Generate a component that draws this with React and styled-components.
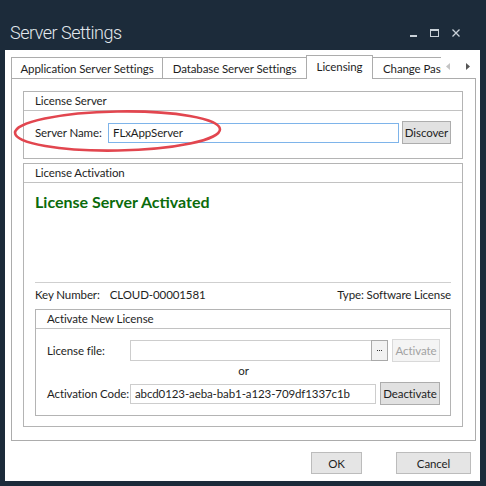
import React from "react";
import styled, { createGlobalStyle } from "styled-components";

const GlobalStyle = createGlobalStyle`
  html, body {
    margin: 0;
    padding: 0;
    background: #1c2b3a;
  }
  * {
    box-sizing: border-box;
  }
`;

const uiFont = `"Lato", "Liberation Sans", sans-serif`;

const Window = styled.div`
  position: relative;
  width: 486px;
  height: 486px;
  padding: 0 6px 5px 5px;
  display: flex;
  flex-direction: column;
  background: #1c2b3a;
  font-family: ${uiFont};
  font-size: 11.5px;
  letter-spacing: -0.1px;
  color: #1e1e1e;
`;

const TitleBar = styled.div`
  height: 50px;
  display: flex;
  align-items: flex-start;
`;

const Title = styled.h1`
  flex: 1;
  margin: 0;
  padding: 22px 0 0 5px;
  font: 300 18px/22px "Roboto", sans-serif;
  letter-spacing: -0.5px;
  color: #e3e9ee;
`;

const WinControls = styled.div`
  display: flex;
  margin: 29px 14px 0 0;
`;

const WinButton = styled.div`
  width: 21px;
  height: 8px;
  display: flex;
  align-items: flex-end;
  justify-content: center;
  color: #c9d1d8;
`;

const Body = styled.div`
  flex: 1;
  background: #fff;
  padding: 5px 4px 7px 6px;
  display: flex;
  flex-direction: column;
`;

const TabStrip = styled.div`
  height: 23px;
  display: flex;
  align-items: flex-start;
  position: relative;
  z-index: 1;
`;

const TabList = styled.div`
  flex: 1;
  height: 24px;
  display: flex;
  align-items: flex-start;
  overflow: hidden;
`;

const Tab = styled.div`
  flex-shrink: 0;
  width: ${(p) => p.$w}px;
  height: ${(p) => (p.$active ? 24 : 21)}px;
  margin-top: ${(p) => (p.$active ? 0 : 2)}px;
  margin-left: ${(p) => (p.$first ? 0 : -1)}px;
  padding-left: ${(p) => (p.$left ? 10 : 0)}px;
  padding-bottom: ${(p) => (p.$active ? 2 : 0)}px;
  border: 1px solid #acacac;
  border-bottom: none;
  background: #fff;
  position: relative;
  z-index: ${(p) => (p.$active ? 2 : 1)};
  display: flex;
  align-items: center;
  justify-content: ${(p) => (p.$left ? "flex-start" : "center")};
  white-space: nowrap;
  color: #1e1e1e;
`;

const TabArrows = styled.div`
  width: 35px;
  height: 23px;
  display: flex;
  align-items: center;
  padding-left: 5px;
  gap: 16px;
`;

const TabPanel = styled.div`
  flex: 1;
  border: 1px solid #acacac;
  padding: 12px 12px 13px 11px;
  display: flex;
  flex-direction: column;
  gap: 4px;
`;

const Group = styled.section`
  border: 1px solid #b4b4b4;
  display: flex;
  flex-direction: column;
  flex: ${(p) => (p.$grow ? 1 : "none")};
`;

const GroupHeader = styled.div`
  height: 19px;
  line-height: 18px;
  padding-left: 11px;
  border-bottom: 1px solid #c2c2c2;
`;

const GroupContent = styled.div`
  flex: 1;
  display: flex;
  flex-direction: column;
  padding: ${(p) => p.$pad};
`;

const Row = styled.div`
  height: 23px;
  display: flex;
  align-items: center;
  gap: ${(p) => p.$gap || 0}px;
`;

const Label = styled.span`
  width: ${(p) => p.$w}px;
  flex-shrink: 0;
  white-space: nowrap;
`;

const TextBox = styled.div`
  flex: 1;
  height: 20px;
  border: 1px solid ${(p) => (p.$focused ? "#7eb4ea" : "#cdcdcd")};
  padding-left: 4px;
  display: flex;
  align-items: center;
  white-space: nowrap;
  overflow: hidden;
  background: #fff;
`;

const FileBox = styled.div`
  flex: 1;
  height: 21px;
  border: 1px solid #cdcdcd;
  display: flex;
`;

const BrowseButton = styled.div`
  margin: -1px -1px -1px auto;
  width: 17px;
  border: 1px solid #a9a9a9;
  background: #f2f2f2;
  display: flex;
  align-items: center;
  justify-content: center;
  gap: 1px;
`;

const Dot = styled.span`
  width: 1px;
  height: 1px;
  background: #333;
`;

const Button = styled.button`
  width: ${(p) => p.$w}px;
  height: ${(p) => p.$h || 23}px;
  flex-shrink: 0;
  padding: 0;
  font: inherit;
  letter-spacing: inherit;
  color: ${(p) => (p.disabled ? "#a2a2a2" : "#1e1e1e")};
  background: ${(p) => (p.disabled ? "#f4f4f4" : "#e1e1e1")};
  border: 1px solid ${(p) => (p.disabled ? "#d9d9d9" : "#adadad")};
  border-radius: 0;
`;

const Status = styled.div`
  font-size: 16px;
  font-weight: 700;
  line-height: 20px;
  letter-spacing: 0;
  color: #0b6b0b;
`;

const Spacer = styled.div`
  flex: 1;
`;

const Separator = styled.div`
  border-top: 1px solid #cfcfcf;
`;

const KeyRow = styled.div`
  display: flex;
  justify-content: space-between;
  line-height: 18px;
  padding: 3px 0 5px;
`;

const KeyValue = styled.span`
  margin-left: 10px;
`;

const OrLine = styled.div`
  height: 18px;
  line-height: 18px;
  margin-bottom: 2px;
  text-align: center;
`;

const Footer = styled.div`
  margin-top: 11px;
  display: flex;
  justify-content: flex-end;
  gap: 34px;
  padding-right: 5px;
`;

const FooterButton = styled(Button)`
  height: 22px;
  background: #e5e5e5;
  border-color: #bcbcbc;
`;

const Annotation = styled.svg`
  position: absolute;
  left: 12px;
  top: 108px;
  pointer-events: none;
`;

function Arrow({ dir, color }) {
  return (
    <svg width="4" height="7" viewBox="0 0 4 7">
      <path d={dir === "left" ? "M4 0 L0 3.5 L4 7 Z" : "M0 0 L4 3.5 L0 7 Z"} fill={color} />
    </svg>
  );
}

export default function App() {
  return (
    <>
      <GlobalStyle />
      <Window>
        <TitleBar>
          <Title>Server Settings</Title>
          <WinControls>
            <WinButton>
              <svg width="7" height="2">
                <rect width="7" height="2" fill="currentColor" />
              </svg>
            </WinButton>
            <WinButton>
              <svg width="9" height="8" viewBox="0 0 9 8">
                <rect x="0.5" y="0.5" width="8" height="7" fill="none" stroke="currentColor" />
                <rect x="0" y="0" width="9" height="2" fill="currentColor" />
              </svg>
            </WinButton>
            <WinButton>
              <svg width="8" height="8" viewBox="0 0 8 8">
                <path d="M0.5 0.5 L7.5 7.5 M7.5 0.5 L0.5 7.5" stroke="currentColor" strokeWidth="1.3" />
              </svg>
            </WinButton>
          </WinControls>
        </TitleBar>

        <Body>
          <TabStrip>
            <TabList>
              <Tab $w={152} $first>Application Server Settings</Tab>
              <Tab $w={145}>Database Server Settings</Tab>
              <Tab $w={67} $active>Licensing</Tab>
              <Tab $w={114} $left>Change Password</Tab>
            </TabList>
            <TabArrows>
              <Arrow dir="left" color="#c4c4c4" />
              <Arrow dir="right" color="#555" />
            </TabArrows>
          </TabStrip>

          <TabPanel>
            <Group>
              <GroupHeader>License Server</GroupHeader>
              <GroupContent $pad="10px 11px 14px">
                <Row $gap={3}>
                  <Label $w={70}>Server Name:</Label>
                  <TextBox $focused>FLxAppServer</TextBox>
                  <Button $w={49}>Discover</Button>
                </Row>
              </GroupContent>
            </Group>

            <Group $grow>
              <GroupHeader>License Activation</GroupHeader>
              <GroupContent $pad="9px 11px 10px">
                <Status>License Server Activated</Status>
                <Spacer />
                <Separator />
                <KeyRow>
                  <span>
                    Key Number:<KeyValue>CLOUD-00001581</KeyValue>
                  </span>
                  <span>Type: Software License</span>
                </KeyRow>
                <Group>
                  <GroupHeader>Activate New License</GroupHeader>
                  <GroupContent $pad="10px 10px 10px 11px">
                    <Row $gap={4}>
                      <Label $w={79}>License file:</Label>
                      <FileBox>
                        <BrowseButton>
                          <Dot />
                          <Dot />
                          <Dot />
                        </BrowseButton>
                      </FileBox>
                      <Button $w={48} disabled>
                        Activate
                      </Button>
                    </Row>
                    <OrLine>or</OrLine>
                    <Row $gap={4}>
                      <Label $w={79}>Activation Code:</Label>
                      <TextBox>abcd0123-aeba-bab1-a123-709df1337c1b</TextBox>
                      <Button $w={60}>Deactivate</Button>
                    </Row>
                  </GroupContent>
                </Group>
              </GroupContent>
            </Group>
          </TabPanel>

          <Footer>
            <FooterButton $w={51}>OK</FooterButton>
            <FooterButton $w={75}>Cancel</FooterButton>
          </Footer>
        </Body>

        <Annotation width="214" height="48" viewBox="0 0 214 48">
          <ellipse
            cx="105.5"
            cy="23"
            rx="102.5"
            ry="19.5"
            fill="none"
            stroke="#e2464f"
            strokeWidth="2.6"
            transform="rotate(-1 105.5 23)"
          />
        </Annotation>
      </Window>
    </>
  );
}
